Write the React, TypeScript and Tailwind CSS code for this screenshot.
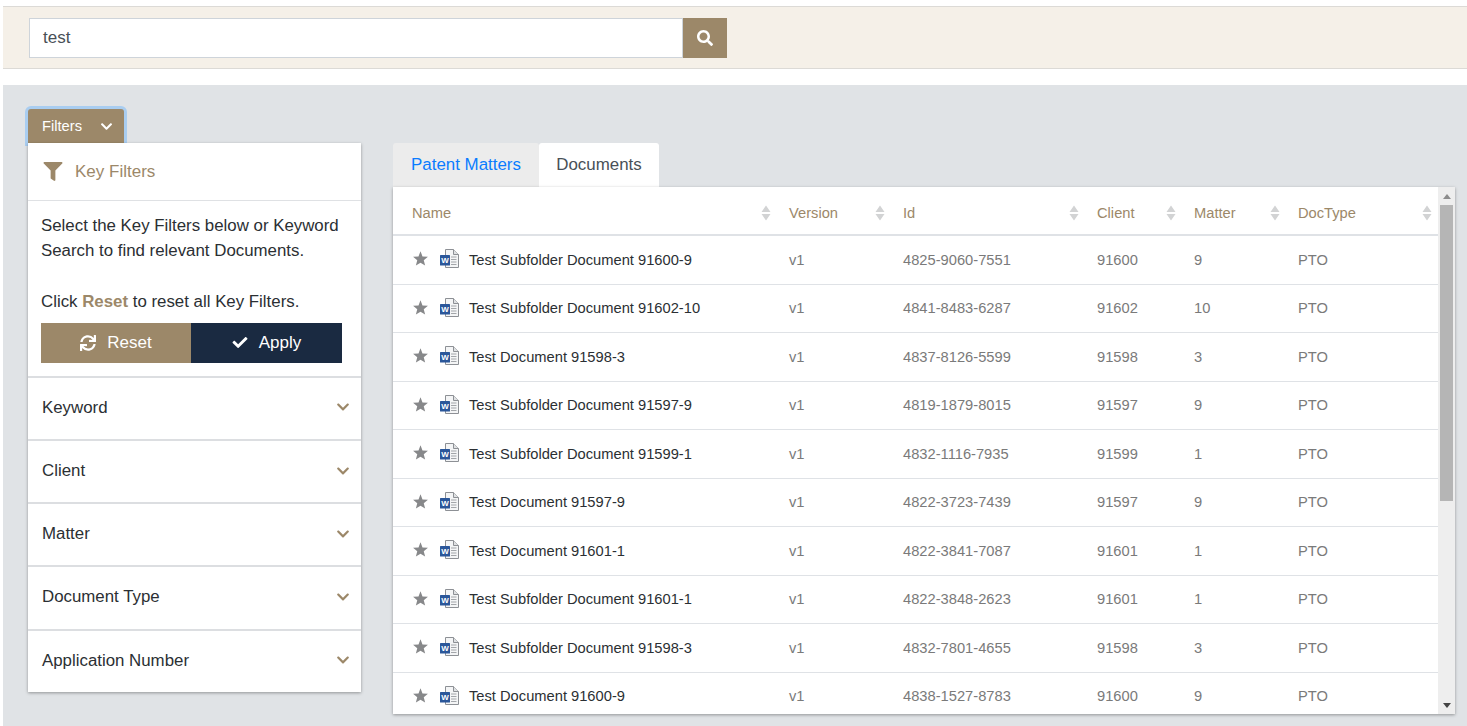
import React from "react";
import { FaCheck, FaChevronDown, FaFilter, FaSearch, FaSync } from "react-icons/fa";

const docs = [
  ["Test Subfolder Document 91600-9", "4825-9060-7551", "91600", "9"],
  ["Test Subfolder Document 91602-10", "4841-8483-6287", "91602", "10"],
  ["Test Document 91598-3", "4837-8126-5599", "91598", "3"],
  ["Test Subfolder Document 91597-9", "4819-1879-8015", "91597", "9"],
  ["Test Subfolder Document 91599-1", "4832-1116-7935", "91599", "1"],
  ["Test Document 91597-9", "4822-3723-7439", "91597", "9"],
  ["Test Document 91601-1", "4822-3841-7087", "91601", "1"],
  ["Test Subfolder Document 91601-1", "4822-3848-2623", "91601", "1"],
  ["Test Subfolder Document 91598-3", "4832-7801-4655", "91598", "3"],
  ["Test Document 91600-9", "4838-1527-8783", "91600", "9"],
];

const filters = ["Keyword", "Client", "Matter", "Document Type", "Application Number"];

const columns = "grid grid-cols-[377px_114px_194px_97px_104px_1fr]";

function SortIcon() {
  return (
    <svg width="10" height="16" viewBox="0 0 10 16" className="-mr-[1px] text-[#d2d3d4]">
      <path d="M5 0.5 9.5 7H0.5Z M0.5 9H9.5L5 15.5Z" fill="currentColor" />
    </svg>
  );
}

function StarIcon() {
  return (
    <svg width="15" height="15" viewBox="0 0 24 24" className="-mt-[2px] shrink-0 text-[#87888a]">
      <path d="M12 0.5 15.2 8.6 23.9 9.2 17.2 14.8 19.4 23.3 12 18.6 4.6 23.3 6.8 14.8 0.1 9.2 8.8 8.6Z" fill="currentColor" />
    </svg>
  );
}

function WordIcon() {
  return (
    <svg width="19" height="19" viewBox="0 0 19 19" className="-mt-[2px] ml-[12px] shrink-0">
      <path d="M5.5 0.5h8l5 5v13h-13Z" fill="#f4f5f6" stroke="#8d9095" strokeWidth="1" />
      <path d="M13.5 0.5v5h5" fill="#dfe1e3" stroke="#8d9095" strokeWidth="1" />
      <path d="M11 8h5.5M11 10.5h5.5M11 13h5.5M11 15.5h5.5" stroke="#a3a6aa" strokeWidth="1" />
      <rect x="0" y="6" width="10" height="10.5" rx="0.5" fill="#2b579a" />
      <text x="5" y="14.3" textAnchor="middle" fontSize="8" fontWeight="700" fill="#ffffff" fontFamily="Liberation Sans, sans-serif">
        W
      </text>
    </svg>
  );
}

function HeaderCell({ label, last }: { label: string; last?: boolean }) {
  return (
    <div className={`flex items-center justify-between pl-[19px] pt-[4px] ${last ? "pr-[7px]" : ""}`}>
      <span>{label}</span>
      <SortIcon />
    </div>
  );
}

function DocRow({ doc }: { doc: string[] }) {
  return (
    <div className={`${columns} h-[48.5px] shrink-0 items-center border-b border-[#dfe2e6] text-[14.7px] text-[#7a7a7a]`}>
      <div className="flex items-center pl-[20px]">
        <StarIcon />
        <WordIcon />
        <span className="ml-[10px] text-[#2b2f33]">{doc[0]}</span>
      </div>
      <div className="pl-[19px]">v1</div>
      <div className="pl-[19px]">{doc[1]}</div>
      <div className="pl-[19px]">{doc[2]}</div>
      <div className="pl-[19px]">{doc[3]}</div>
      <div className="pl-[19px]">PTO</div>
    </div>
  );
}

export default function App() {
  return (
    <div className="h-[726px] w-[1467px] overflow-hidden bg-white pl-[3px] font-['Liberation_Sans',Arial,sans-serif]">
      <div className="mt-[6px] flex h-[63px] items-center border-y border-[#dcdad6] bg-[#f5f0e8] pl-[26px]">
        <div className="flex h-[40px] w-[654px] items-center border border-[#ced4da] bg-white pl-[13px] text-[17px] text-[#495057]">
          test
        </div>
        <div className="flex h-[40px] w-[44px] items-center justify-center bg-[#9c8869]">
          <FaSearch className="h-[16px] w-[16px] text-white" />
        </div>
      </div>

      <div className="mt-[16px] flex h-[641px] bg-[#e0e3e6] pl-[25px] pr-[12px]">
        <div className="mt-[24px] w-[333px]">
          <div className="relative z-10 flex h-[34px] w-[96px] items-center rounded-t-[3px] bg-[#9c8869] pl-[14px] text-[14.7px] text-white shadow-[0_0_0_3px_#a9cdf0]">
            Filters
            <FaChevronDown className="ml-[18px] h-[13px] w-[13px]" />
          </div>
          <div className="relative z-20 bg-white shadow-[0_1px_3px_rgba(0,0,0,0.35)]">
            <div className="flex h-[58px] items-center border-b border-[#dfe1e4] pl-[15px] text-[17px] text-[#9c8869]">
              <FaFilter className="h-[19px] w-[20px]" />
              <span className="ml-[12px]">Key Filters</span>
            </div>
            <div className="px-[13px] pt-[12px] text-[16.85px] leading-[25.3px] text-[#2b2f33]">
              <p>
                Select the Key Filters below or Keyword
                <br />
                Search to find relevant Documents.
              </p>
              <p className="mt-[25px]">
                Click <b className="text-[#9c8869]">Reset</b> to reset all Key Filters.
              </p>
            </div>
            <div className="mx-[13px] mt-[9px] flex h-[40px] w-[301px] text-[17px] text-white">
              <div className="flex w-[150px] items-center justify-center bg-[#9c8869]">
                <FaSync className="mr-[11px] h-[16px] w-[16px]" />
                Reset
              </div>
              <div className="flex w-[151px] items-center justify-center bg-[#1a2a41]">
                <FaCheck className="mr-[11px] h-[15px] w-[16px]" />
                Apply
              </div>
            </div>
            <div className="mt-[13px]">
              {filters.map((name) => (
                <div
                  key={name}
                  className="flex h-[63.2px] items-center justify-between border-t-2 border-[#dcdee1] pb-[2px] pl-[14px] pr-[11px] text-[16.85px] text-[#2b2f33]"
                >
                  {name}
                  <FaChevronDown className="h-[14px] w-[14px] text-[#9c8869]" />
                </div>
              ))}
            </div>
          </div>
        </div>

        <div className="ml-[32px] mt-[58px] flex w-[1062px] flex-col">
          <div className="flex h-[44px] text-[16.9px]">
            <div className="flex w-[146px] items-center justify-center rounded-t-[3px] bg-[#ececec] text-[#0a7cff]">
              Patent Matters
            </div>
            <div className="flex w-[120px] items-center justify-center rounded-t-[3px] bg-white text-[#495057]">
              Documents
            </div>
          </div>
          <div className="flex h-[527px] overflow-hidden bg-white shadow-[0_1px_3px_rgba(0,0,0,0.35)]">
            <div className="flex min-w-0 flex-1 flex-col">
              <div className={`${columns} h-[49.2px] shrink-0 border-b-2 border-[#dfe2e6] text-[14.7px] text-[#9c8869]`}>
                <HeaderCell label="Name" />
                <HeaderCell label="Version" />
                <HeaderCell label="Id" />
                <HeaderCell label="Client" />
                <HeaderCell label="Matter" />
                <HeaderCell label="DocType" last />
              </div>
              {docs.map((doc) => (
                <DocRow key={doc[1]} doc={doc} />
              ))}
            </div>
            <div className="flex w-[17px] shrink-0 flex-col bg-[#eeeeee]">
              <div className="flex h-[18px] items-center justify-center">
                <svg width="8" height="5" viewBox="0 0 8 5">
                  <path d="M4 0 8 5H0Z" fill="#8c8c8c" />
                </svg>
              </div>
              <div className="mx-[2px] h-[296px] bg-[#b5b5b5]" />
              <div className="mt-auto flex h-[18px] items-center justify-center">
                <svg width="8" height="5" viewBox="0 0 8 5">
                  <path d="M0 0H8L4 5Z" fill="#444444" />
                </svg>
              </div>
            </div>
          </div>
        </div>
      </div>
    </div>
  );
}
